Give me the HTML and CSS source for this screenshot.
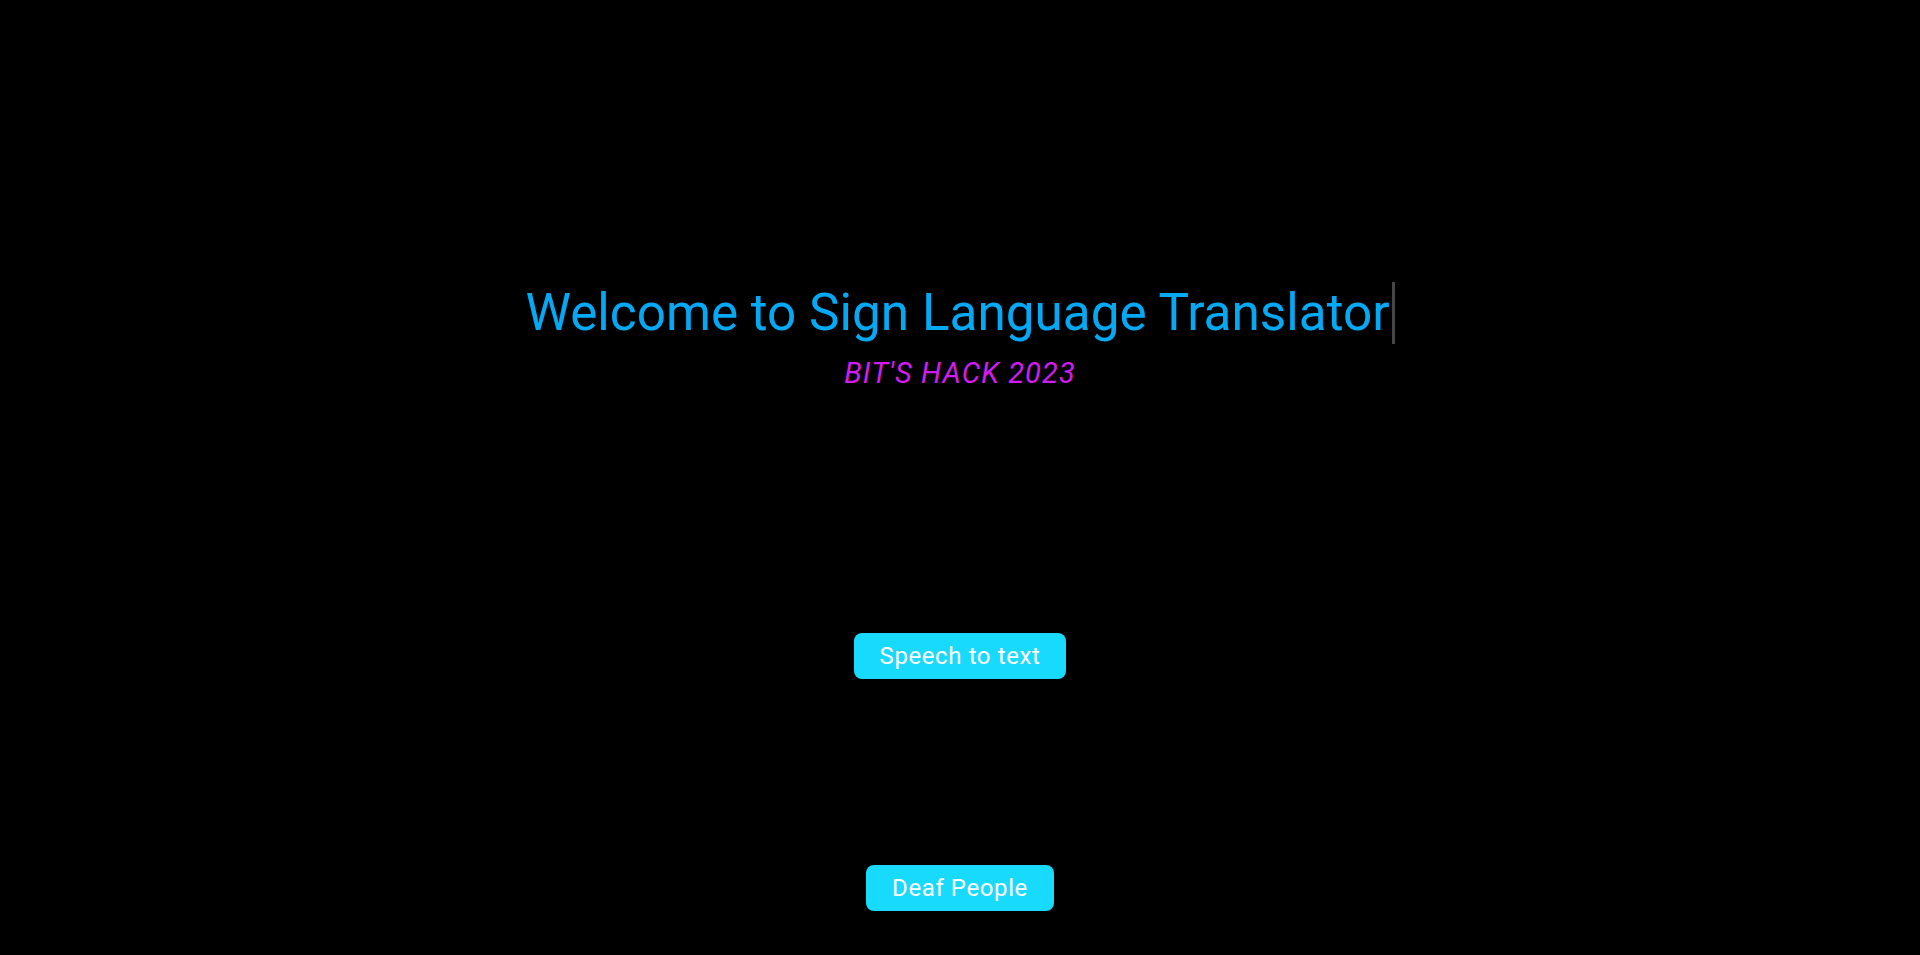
FILE: index.html
```html
<!DOCTYPE html>
<html lang="en">
<head>
<meta charset="utf-8">
<title>Sign Language Translator</title>
<link rel="stylesheet" href="styles.css">
</head>
<body>
<main class="page">
  <header class="hero">
    <h1 class="title"><span class="typed">Welcome to Sign Language Translator</span></h1>
    <p class="subtitle">BIT'S HACK 2023</p>
  </header>
  <div class="actions">
    <button class="btn" type="button">Speech to text</button>
    <button class="btn" type="button">Deaf People</button>
  </div>
</main>
</body>
</html>
```
FILE: styles.css
```css
html, body {
  margin: 0;
  padding: 0;
  background: #000;
  height: 100%;
}
body {
  font-family: Roboto, "Liberation Sans", sans-serif;
  color: #fff;
}
.page {
  display: flex;
  flex-direction: column;
  align-items: center;
  padding-top: 282px;
}
.hero {
  display: flex;
  flex-direction: column;
  align-items: center;
}
.title {
  margin: 0;
  font-weight: 400;
  font-size: 51.3px;
  line-height: 62px;
  color: #03a9f4;
}
.typed {
  display: inline-block;
  border-right: 3px solid #464646;
  padding-right: 2px;
}
.subtitle {
  margin: 13px 0 0;
  font-style: italic;
  font-size: 29px;
  line-height: 32px;
  letter-spacing: 1.1px;
  color: #d21cf0;
}
.actions {
  display: flex;
  flex-direction: column;
  align-items: center;
  gap: 186px;
  margin-top: 244px;
}
.btn {
  font-family: Roboto, "Liberation Sans", sans-serif;
  font-size: 24px;
  line-height: 28px;
  letter-spacing: 0.6px;
  color: #fff;
  background: #18dafd;
  border: none;
  border-radius: 8px;
  padding: 9px 26px;
  cursor: pointer;
}
```
